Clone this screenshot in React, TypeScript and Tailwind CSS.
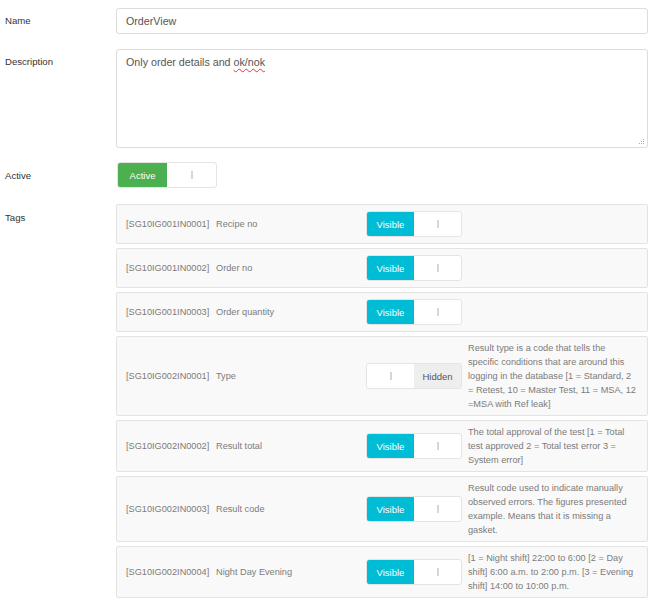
import React from "react";

type Tag = {
  code: string;
  name: string;
  visible: boolean;
  note?: string;
};

const tags: Tag[] = [
  { code: "[SG10IG001IN0001]", name: "Recipe no", visible: true },
  { code: "[SG10IG001IN0002]", name: "Order no", visible: true },
  { code: "[SG10IG001IN0003]", name: "Order quantity", visible: true },
  {
    code: "[SG10IG002IN0001]",
    name: "Type",
    visible: false,
    note: "Result type is a code that tells the specific conditions that are around this logging in the database [1 = Standard, 2 = Retest, 10 = Master Test, 11 = MSA, 12 =MSA with Ref leak]",
  },
  {
    code: "[SG10IG002IN0002]",
    name: "Result total",
    visible: true,
    note: "The total approval of the test [1 = Total test approved 2 = Total test error 3 = System error]",
  },
  {
    code: "[SG10IG002IN0003]",
    name: "Result code",
    visible: true,
    note: "Result code used to indicate manually observed errors. The figures presented example. Means that it is missing a gasket.",
  },
  {
    code: "[SG10IG002IN0004]",
    name: "Night Day Evening",
    visible: true,
    note: "[1 = Night shift] 22:00 to 6:00 [2 = Day shift] 6:00 a.m. to 2:00 p.m. [3 = Evening shift] 14:00 to 10:00 p.m.",
  },
];

function Handle() {
  return <span className="block w-[2px] h-[8px] bg-[#d6d6d6]" />;
}

// on/off switch, bootstrap-switch style
function Switch({
  on,
  onLabel,
  offLabel,
  color,
  width,
}: {
  on: boolean;
  onLabel: string;
  offLabel: string;
  color: string;
  width: string;
}) {
  return (
    <div
      className={`flex h-[26px] ${width} shrink-0 overflow-hidden rounded-[3px] border border-[#e4e4e4] bg-white text-[9.5px] leading-none`}
    >
      {on ? (
        <>
          <span className={`flex w-1/2 items-center justify-center pt-[2px] text-white ${color}`}>{onLabel}</span>
          <span className="flex w-1/2 items-center justify-center">
            <Handle />
          </span>
        </>
      ) : (
        <>
          <span className="flex w-1/2 items-center justify-center">
            <Handle />
          </span>
          <span className="flex w-1/2 items-center justify-center bg-[#eeeeee] pt-[2px] text-[#555]">{offLabel}</span>
        </>
      )}
    </div>
  );
}

function Label({ children, pt }: { children: React.ReactNode; pt: string }) {
  return <div className={`w-[116px] shrink-0 pl-[5px] text-[9.6px] leading-[14px] text-[#333] ${pt}`}>{children}</div>;
}

export default function App() {
  return (
    <div className="min-h-[600px] bg-white pt-[8px] pr-[7px] font-['Liberation_Sans',Arial,sans-serif]">
      <div className="flex">
        <Label pt="pt-[6px]">Name</Label>
        <div className="flex h-[26px] flex-1 items-center rounded-[3px] border border-[#dcdcdc] pl-[9px] text-[10.7px] text-[#555]">
          OrderView
        </div>
      </div>

      <div className="mt-[15px] flex">
        <Label pt="pt-[6px]">Description</Label>
        <div className="relative h-[99px] flex-1 rounded-[3px] border border-[#dcdcdc] pl-[9px] pt-[5px] text-[10.7px] leading-[15px] text-[#555]">
          Only order details and{" "}
          <span className="underline decoration-wavy decoration-[#e53935] decoration-[1px] underline-offset-[2px]">
            ok/nok
          </span>
          <svg className="absolute bottom-[2px] right-[2px]" width="7" height="7" viewBox="0 0 7 7">
            <g fill="#a8a8a8">
              <rect x="5" y="1" width="1" height="1" />
              <rect x="3" y="3" width="1" height="1" />
              <rect x="5" y="3" width="1" height="1" />
              <rect x="1" y="5" width="1" height="1" />
              <rect x="3" y="5" width="1" height="1" />
              <rect x="5" y="5" width="1" height="1" />
            </g>
          </svg>
        </div>
      </div>

      <div className="mt-[14px] flex">
        <Label pt="pt-[7px]">Active</Label>
        <div className="flex-1 pl-[1px]">
          <Switch on onLabel="Active" offLabel="Inactive" color="bg-[#4caf50]" width="w-[100px]" />
        </div>
      </div>

      <div className="mt-[16px] flex">
        <Label pt="pt-[7px]">Tags</Label>
        <div className="flex flex-1 flex-col gap-[4px]">
          {tags.map((t) => (
            <div
              key={t.code}
              className="flex min-h-[40px] items-center rounded-[2px] border border-[#e3e3e3] bg-[#f9f9f9] py-[4px] pl-[9px] text-[9.2px] leading-[14px] text-[#7b7b7b]"
            >
              <div className="flex w-[240px] shrink-0">
                <span className="w-[90px] shrink-0">{t.code}</span>
                <span>{t.name}</span>
              </div>
              <Switch on={t.visible} onLabel="Visible" offLabel="Hidden" color="bg-[#00bcd4]" width="w-[96px]" />
              {t.note && <div className="ml-[6px] w-[170px]">{t.note}</div>}
            </div>
          ))}
        </div>
      </div>
    </div>
  );
}
